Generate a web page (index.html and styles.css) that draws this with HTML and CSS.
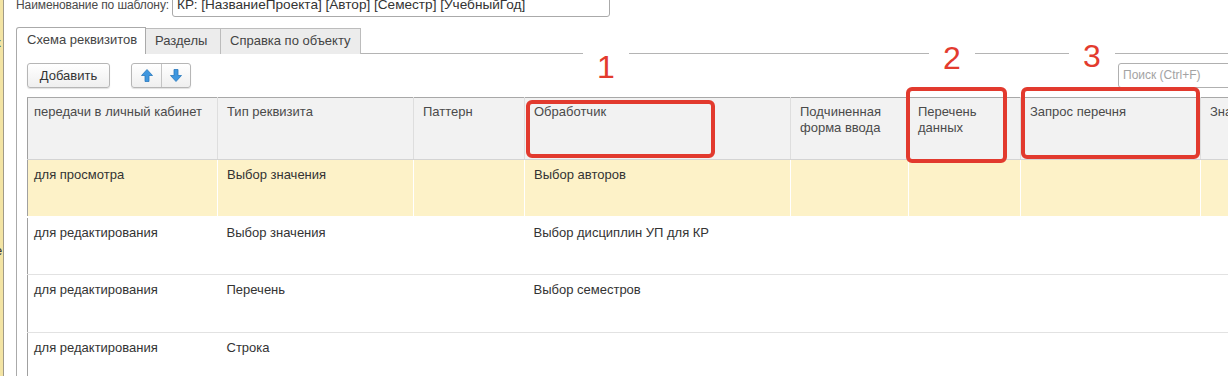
FILE: index.html
```html
<!DOCTYPE html>
<html lang="ru">
<head>
  <meta charset="UTF-8">
  <title>Схема реквизитов</title>
  <link rel="stylesheet" href="styles.css">
</head>
<body>
  <div class="page">
    <div class="strip">
      <span class="strip-glyph g1">к</span>
      <span class="strip-glyph g2">ı</span>
      <span class="strip-glyph g3">е</span>
    </div>

    <div class="main">
      <div class="name-row">
        <span class="name-label">Наименование по шаблону:</span>
        <div class="name-input">КР: [НазваниеПроекта] [Автор] [Семестр] [УчебныйГод]</div>
      </div>

      <div class="tabs">
        <div class="tab active">Схема реквизитов</div>
        <div class="tab t2">Разделы</div>
        <div class="tab t3">Справка по объекту</div>
      </div>

      <div class="tab-panel">
        <div class="toolbar">
          <button class="btn">Добавить</button>
          <div class="btn-group">
            <button class="btn-icon" title="Вверх">
              <svg width="12" height="13" viewBox="0 0 12 13">
                <path d="M6 0.5 L11.5 6.5 L8 6.5 L8 12.5 L4 12.5 L4 6.5 L0.5 6.5 Z" fill="#3f97df" stroke="#2a78bd" stroke-width="0.8"/>
              </svg>
            </button>
            <button class="btn-icon" title="Вниз">
              <svg width="12" height="13" viewBox="0 0 12 13">
                <path d="M6 12.5 L11.5 6.5 L8 6.5 L8 0.5 L4 0.5 L4 6.5 L0.5 6.5 Z" fill="#3f97df" stroke="#2a78bd" stroke-width="0.8"/>
              </svg>
            </button>
          </div>
          <div class="search">Поиск (Ctrl+F)</div>
        </div>

        <table class="grid">
          <colgroup>
            <col style="width:190px">
            <col style="width:196px">
            <col style="width:111px">
            <col style="width:266px">
            <col style="width:118px">
            <col style="width:112px">
            <col style="width:180px">
            <col style="width:100px">
          </colgroup>
          <thead>
            <tr>
              <th class="first">передачи в личный кабинет</th>
              <th>Тип реквизита</th>
              <th>Паттерн</th>
              <th>Обработчик</th>
              <th>Подчиненная форма ввода</th>
              <th>Перечень данных</th>
              <th>Запрос перечня</th>
              <th>Значение</th>
            </tr>
          </thead>
          <tbody>
            <tr class="current">
              <td class="first">для просмотра</td>
              <td>Выбор значения</td>
              <td></td>
              <td>Выбор авторов</td>
              <td></td>
              <td></td>
              <td></td>
              <td></td>
            </tr>
            <tr>
              <td class="first">для редактирования</td>
              <td>Выбор значения</td>
              <td></td>
              <td>Выбор дисциплин УП для КР</td>
              <td></td>
              <td></td>
              <td></td>
              <td></td>
            </tr>
            <tr>
              <td class="first">для редактирования</td>
              <td>Перечень</td>
              <td></td>
              <td>Выбор семестров</td>
              <td></td>
              <td></td>
              <td></td>
              <td></td>
            </tr>
            <tr>
              <td class="first">для редактирования</td>
              <td>Строка</td>
              <td></td>
              <td></td>
              <td></td>
              <td></td>
              <td></td>
              <td></td>
            </tr>
          </tbody>
        </table>
      </div>
    </div>

    <!-- пометки поверх скриншота -->
    <span class="mark-num n1">1</span>
    <span class="mark-num n2">2</span>
    <span class="mark-num n3">3</span>
    <div class="mark-box b1"></div>
    <div class="mark-box b2"></div>
    <div class="mark-box b3"></div>
  </div>
</body>
</html>
```

FILE: styles.css
```css
html, body {
  margin: 0;
  padding: 0;
  overflow: hidden;
  background: #fff;
}
body {
  font-family: "Liberation Sans", Arial, sans-serif;
  font-size: 13px;
  color: #4a4a4a;
}
.page {
  position: relative;
  display: flex;
  width: 1300px;
  height: 376px;
}
.strip {
  width: 3px;
  flex-shrink: 0;
  background: #f3e4a4;
  border-right: 1px solid #a09a88;
  overflow: hidden;
  display: flex;
  flex-direction: column;
}
.strip-glyph {
  display: block;
  font-size: 13px;
  line-height: 14px;
  color: #333;
  margin-left: -5px;
}
.g1 { margin-top: 36px; }
.g2 { margin-top: 54px; }
.g3 { margin-top: 126px; }

.main {
  flex: 1;
  padding-left: 12px;
}

.name-row {
  display: flex;
  align-items: center;
  height: 24px;
  margin-top: -7px;
  white-space: nowrap;
}
.name-label {
  width: 156px;
  flex-shrink: 0;
  font-size: 12px;
  letter-spacing: -0.1px;
  color: #4a4a4a;
}
.name-input {
  width: 432px;
  height: 22px;
  line-height: 22px;
  padding-left: 4px;
  border: 1px solid #aaa;
  border-radius: 3px;
  font-size: 13.6px;
  color: #333;
  overflow: hidden;
}

.tabs {
  display: flex;
  margin-top: 10px;
  height: 26px;
  white-space: nowrap;
}
.tab {
  box-sizing: border-box;
  height: 26px;
  line-height: 24px;
  margin-top: 1px;
  padding-left: 9px;
  background: #ececec;
  border: 1px solid #bcbcbc;
  border-left: none;
  border-bottom: none;
  color: #444;
}
.tab.active {
  width: 130px;
  margin-top: 0;
  height: 27px;
  padding-left: 10px;
  background: #fff;
  border: 1px solid #aaa;
  border-bottom: none;
  border-radius: 3px 0 0 0;
  position: relative;
  z-index: 1;
}
.tab.t2 { width: 75px; }
.tab.t3 { width: 140px; }
.tab-panel {
  border-top: 1px solid #b4b4b4;
  border-left: 1px solid #aaa;
  padding-left: 10px;
  height: 330px;
}

.toolbar {
  display: flex;
  align-items: center;
  margin-top: 9px;
  height: 25px;
}
.btn {
  height: 25px;
  width: 83px;
  font-family: inherit;
  font-size: 13px;
  color: #333;
  background: linear-gradient(#fff, #efefef);
  border: 1px solid #b6b6b6;
  border-radius: 3px;
  box-shadow: 0 1px 1px rgba(0,0,0,0.12);
  padding: 0;
}
.btn-group {
  display: flex;
  margin-left: 21px;
  border: 1px solid #b6b6b6;
  border-radius: 3px;
  box-shadow: 0 1px 1px rgba(0,0,0,0.12);
  background: linear-gradient(#fff, #efefef);
}
.btn-icon {
  width: 29px;
  height: 23px;
  border: none;
  background: none;
  padding: 0;
  display: flex;
  align-items: center;
  justify-content: center;
}
.btn-icon + .btn-icon {
  border-left: 1px solid #c4c4c4;
}
.search {
  margin-left: auto;
  margin-right: 47px;
  width: 130px;
  height: 23px;
  line-height: 23px;
  padding-left: 4px;
  border: 1px solid #b0b0b0;
  border-radius: 3px;
  color: #a3a3a3;
  font-size: 12px;
}

.grid {
  margin-top: 9px;
  border-collapse: collapse;
  table-layout: fixed;
  width: 1273px;
  border-left: 1px solid #a0a0a0;
}
.grid th {
  height: 62px;
  padding: 6px 9px 0;
  vertical-align: top;
  text-align: left;
  font-weight: normal;
  line-height: 16px;
  background: #f2f2f2;
  color: #4a4a4a;
  border-top: 1px solid #a8a8a8;
  border-bottom: 1px solid #d4d4d4;
  border-right: 1px solid #dedede;
  box-sizing: border-box;
}
.grid td {
  height: 58px;
  padding: 7px 9px 0;
  vertical-align: top;
  line-height: 16px;
  color: #333;
  border-bottom: 1px solid #e2e2e2;
  box-sizing: border-box;
  white-space: nowrap;
}
.grid .first {
  padding-left: 6px;
}
.grid tr.current td {
  background: #fdf2c8;
  border-right: 1px solid #fff;
  border-bottom: 2px solid #fff;
  height: 57px;
}

.mark-num {
  position: absolute;
  font-family: "Liberation Sans", Arial, sans-serif;
  font-size: 32px;
  line-height: 32px;
  color: #e33b2e;
  background: #fff;
  padding: 0 14px;
}
.n1 { left: 583px; top: 51px; }
.n2 { left: 929px; top: 42px; }
.n3 { left: 1069px; top: 40px; }
.mark-box {
  position: absolute;
  box-sizing: border-box;
  border: 4px solid #e23a2e;
  border-radius: 6px;
}
.b1 { left: 526px; top: 100px; width: 189px; height: 58px; }
.b2 { left: 906px; top: 87px; width: 101px; height: 76px; }
.b3 { left: 1021px; top: 87px; width: 179px; height: 72px; }
```
